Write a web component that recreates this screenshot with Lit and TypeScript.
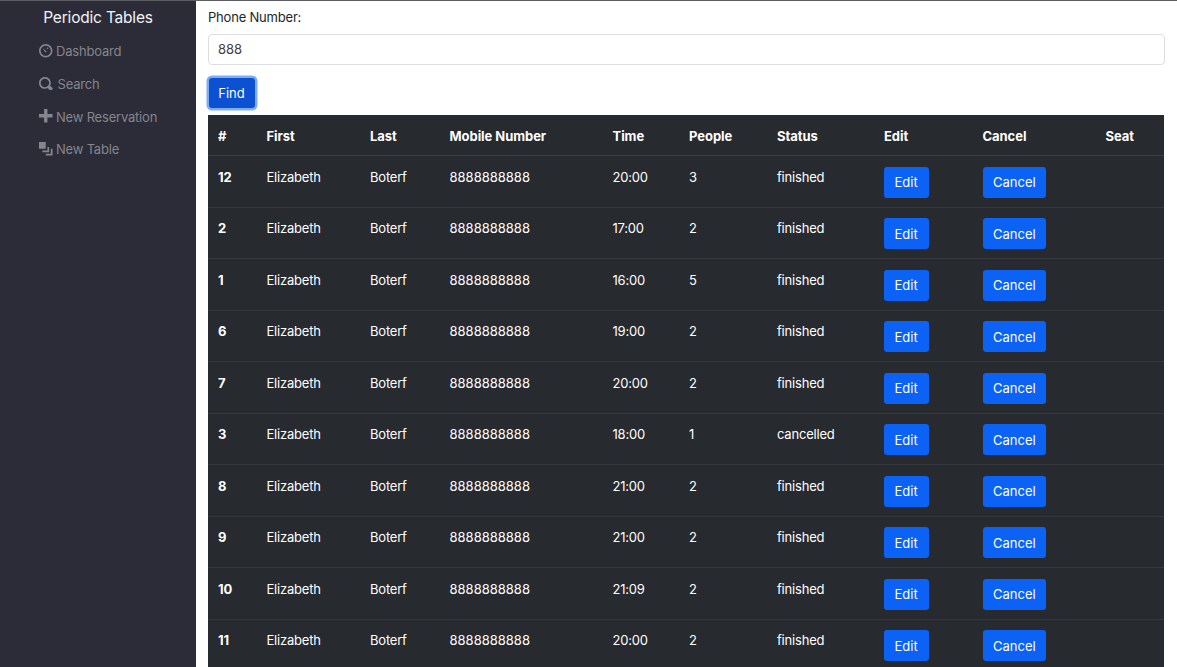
import {css, html, LitElement, svg} from 'lit';
import {customElement} from 'lit/decorators.js';

const NAV = [
    {
        label: 'Dashboard',
        icon: svg`<path d="M4 0C1.8 0 0 1.8 0 4s1.8 4 4 4 4-1.8 4-4-1.8-4-4-4zm0 1c1.66 0 3 1.34 3 3S5.66 7 4 7 1 5.66 1 4s1.34-3 3-3zm1.1 1c-.27 0-.5.23-.5.5S4.83 3 5.1 3s.5-.23.5-.5-.23-.5-.5-.5zM2.3 2.4l1.2 2.3c.12.24.42.33.66.2.24-.12.33-.42.2-.66a.5.5 0 0 0-.36-.26L2.3 2.4z"/>`,
    },
    {
        label: 'Search',
        icon: svg`<path d="M3.5 0C1.57 0 0 1.57 0 3.5S1.57 7 3.5 7c.59 0 1.17-.14 1.66-.41a1 1 0 0 0 .13.13l1 1a1.02 1.02 0 1 0 1.44-1.44l-1-1a1 1 0 0 0-.16-.13c.27-.49.44-1.06.44-1.66C7 1.56 5.43-.01 3.5-.01zm0 1C4.89 1 6 2.11 6 3.5c0 .66-.24 1.27-.66 1.72l-.03.03a1 1 0 0 0-.13.13C4.74 5.78 4.15 6 3.5 6 2.11 6 1 4.89 1 3.5S2.11 1 3.5 1z"/>`,
    },
    {
        label: 'New Reservation',
        icon: svg`<path d="M3 0v3H0v2h3v3h2V5h3V3H5V0H3z"/>`,
    },
    {
        label: 'New Table',
        icon: svg`<path d="M0 0v4h4V0H0zm5 2v3H2v1h4V3H5zm2 2v3H4v1h4V4H7z"/>`,
    },
];

const HEADERS = ['#', 'First', 'Last', 'Mobile Number', 'Time', 'People', 'Status', 'Edit', 'Cancel', 'Seat'];

const RESERVATIONS = [
    {id: 12, time: '20:00', people: 3, status: 'finished'},
    {id: 2, time: '17:00', people: 2, status: 'finished'},
    {id: 1, time: '16:00', people: 5, status: 'finished'},
    {id: 6, time: '19:00', people: 2, status: 'finished'},
    {id: 7, time: '20:00', people: 2, status: 'finished'},
    {id: 3, time: '18:00', people: 1, status: 'cancelled'},
    {id: 8, time: '21:00', people: 2, status: 'finished'},
    {id: 9, time: '21:00', people: 2, status: 'finished'},
    {id: 10, time: '21:09', people: 2, status: 'finished'},
    {id: 11, time: '20:00', people: 2, status: 'finished'},
];

@customElement('app-root')
export class AppRoot extends LitElement {

    static styles = css`
        :host {
            display: flex;
            height: 667px;
            overflow: hidden;
            box-sizing: border-box;
            border-top: 1px solid #5c5d62;
            font-family: "Inter", "Liberation Sans", sans-serif;
            font-size: 13px;
            letter-spacing: -0.2px;
            color: #212529;
            background: #fff;
        }

        .sidebar {
            flex: 0 0 196px;
            background: #2b2c38;
        }

        .brand {
            margin: 0;
            padding-top: 7px;
            text-align: center;
            font-size: 15.5px;
            font-weight: 400;
            line-height: 19px;
            color: #f3f3f5;
        }

        .nav {
            list-style: none;
            margin: 8px 0 0;
            padding: 0 0 0 39px;
        }

        .nav li {
            display: flex;
            align-items: center;
            gap: 3.5px;
            height: 32.7px;
            color: #84858d;
        }

        .nav svg {
            width: 13.5px;
            height: 13.5px;
            fill: currentColor;
            position: relative;
            top: -0.5px;
        }

        .nav li:nth-child(2) span {
            margin-left: 1.5px;
        }

        main {
            flex: 1;
            min-width: 0;
            padding: 0 12.5px 0 12px;
        }

        label {
            display: block;
            padding-top: 8px;
            line-height: 17px;
        }

        input {
            display: block;
            box-sizing: border-box;
            width: 100%;
            height: 31px;
            margin-top: 8px;
            padding: 0 9px 1px;
            border: 1px solid #dcdee0;
            border-radius: 4px;
            font: inherit;
            letter-spacing: 0;
            color: #3d4146;
            outline: none;
        }

        .find {
            display: block;
            box-sizing: border-box;
            width: 46px;
            height: 30px;
            margin: 13px 0 7px 0.5px;
            padding: 0;
            border: 0;
            border-radius: 3px;
            background: #0b51d1;
            box-shadow: 0 0 0 2.5px #7dadf5;
            font: inherit;
            color: #fff;
        }

        table {
            width: 956px;
            table-layout: fixed;
            border-collapse: collapse;
            background: #272a2e;
            color: #fff;
        }

        .w0 { width: 48.5px; }
        .w1 { width: 103.5px; }
        .w2 { width: 79.5px; }
        .w3 { width: 163px; }
        .w4 { width: 76.5px; }
        .w5 { width: 88px; }
        .w6 { width: 107px; }
        .w7 { width: 98.5px; }
        .w8 { width: 123px; }
        .w9 { width: 68.5px; }

        th, td {
            padding: 10.5px 0 0 10px;
            text-align: left;
            vertical-align: top;
            font-weight: 400;
            line-height: 20px;
        }

        th {
            height: 40.5px;
            box-sizing: border-box;
            padding-top: 11px;
            font-weight: 700;
            letter-spacing: -0.05px;
            border-bottom: 1px solid #3c3f43;
        }

        td {
            height: 51.5px;
            box-sizing: border-box;
            border-bottom: 1px solid #34373b;
        }

        td.id {
            font-weight: 700;
        }

        td.phone {
            letter-spacing: 0;
        }

        td.action {
            padding-top: 10.5px;
            padding-left: 9.5px;
        }

        td.action.cancel {
            padding-left: 10.5px;
        }

        .btn {
            display: inline-block;
            box-sizing: border-box;
            height: 31px;
            padding: 0 11px;
            border: 0;
            border-radius: 3px;
            background: #0b62f4;
            font: inherit;
            color: #fff;
        }

        .cancel .btn {
            padding: 0 10px;
        }
    `;

    render() {
        return html`
            <nav class="sidebar">
                <h1 class="brand">Periodic Tables</h1>
                <ul class="nav">
                    ${NAV.map((item) => html`
                        <li>
                            <svg viewBox="0 0 8 8">${item.icon}</svg>
                            <span>${item.label}</span>
                        </li>
                    `)}
                </ul>
            </nav>
            <main>
                <label for="phone">Phone Number:</label>
                <input id="phone" type="text" .value=${'888'}/>
                <button class="find">Find</button>
                <table>
                    <colgroup>
                        ${HEADERS.map((_, i) => html`<col class="w${i}"/>`)}
                    </colgroup>
                    <thead>
                        <tr>${HEADERS.map((h) => html`<th>${h}</th>`)}</tr>
                    </thead>
                    <tbody>
                        ${RESERVATIONS.map((r) => html`
                            <tr>
                                <td class="id">${r.id}</td>
                                <td>Elizabeth</td>
                                <td>Boterf</td>
                                <td class="phone">8888888888</td>
                                <td>${r.time}</td>
                                <td>${r.people}</td>
                                <td>${r.status}</td>
                                <td class="action"><button class="btn">Edit</button></td>
                                <td class="action cancel"><button class="btn">Cancel</button></td>
                                <td></td>
                            </tr>
                        `)}
                    </tbody>
                </table>
            </main>
        `;
    }
}
